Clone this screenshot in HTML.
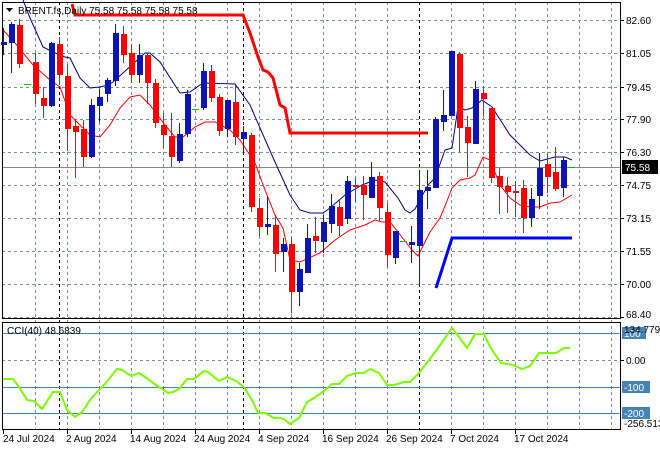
<!DOCTYPE html>
<html><head><meta charset="utf-8"><style>
html,body{margin:0;padding:0;background:#fff;}
svg{display:block;font-family:"Liberation Sans",sans-serif;}
</style></head><body>
<svg width="660" height="450" viewBox="0 0 660 450" xmlns="http://www.w3.org/2000/svg">
<rect width="660" height="450" fill="#fff"/>
<!-- grid -->
<g stroke="#7f8a96" stroke-width="1" stroke-dasharray="3,3" fill="none">
<path d="M2 20.5H620M2 53.5H620M2 87.5H620M2 119.5H620M2 152.5H620M2 185.5H620M2 218.5H620M2 251.5H620M2 284.5H620M2 317.5H620M2 360.5H620"/>
<path d="M35.5 2V429M67.5 2V429M99.5 2V429M131.5 2V429M163.5 2V429M195.5 2V429M227.5 2V429M259.5 2V429M291.5 2V429M323.5 2V429M355.5 2V429M387.5 2V429M451.5 2V429M483.5 2V429M515.5 2V429M547.5 2V429M579.5 2V429M611.5 2V429"/>
</g>
<g stroke="#000" stroke-width="1" stroke-dasharray="3,3">
<path d="M59.5 2V429M243.5 2V429M419.5 2V429"/>
</g>
<!-- price line -->
<path d="M2 167.5H620" stroke="#808890" stroke-width="1"/>
<!-- borders -->
<g stroke="#000" stroke-width="1" fill="none">
<rect x="2.5" y="2.5" width="618" height="316"/>
<rect x="2.5" y="322.5" width="618" height="107"/>
</g>
<!-- MA lines -->
<polyline fill="none" stroke="#000080" stroke-width="1" points="23,0 30,18 43,47 53,52 65,57 70,58 80,78 90,88 100,87 108,85 113,82 145,53 150,53 160,62 180,93 190,92 200,85 205,83 235,84 250,105 260,128 275,162 290,195 300,210 310,213 323,213 330,208 345,195 362,185 375,180 385,182 398,198 405,210 410,213 415,209 428,185 435,178 445,150 452,148 458,107 465,110 472,108 482,100 492,107 510,135 520,145 530,155 540,161 555,157 565,157 572,160"/>
<polyline fill="none" stroke="#ff0000" stroke-width="1" points="3,30 15,43 33,65 50,80 60,87 70,115 80,125 90,135 100,137 110,125 120,108 130,97 140,95 150,105 165,125 175,137 183,137 195,127 205,122 215,122 230,130 240,140 255,163 265,190 275,215 283,228 290,260 300,262 320,253 335,240 350,230 365,225 375,220 382,222 390,222 398,232 405,241 412,250 418,256 430,232 440,218 445,206 452,188 460,180 470,178 475,175 483,157 490,160 500,185 510,198 520,205 530,207 540,207 550,203 560,202 572,195"/>
<!-- step lines -->
<polyline fill="none" stroke="#ff0000" stroke-width="3" points="72,4 75,15 243,15 250,33 258,57 263,70 268,72 273,78 280,105 285,108 290,133 428,133"/>
<polyline fill="none" stroke="#0000ff" stroke-width="3" points="436,288 452,238 572,238"/>
<!-- red candles -->
<g stroke="#ff0000" fill="#ff0000" stroke-width="1">
<path d="M19.5 19V68M35.5 53V104M43.5 87V118M59.5 37V85M67.5 65V151M75.5 120V178M83.5 120V167M123.5 26V63M131.5 44V83M147.5 53V104M155.5 79V128M163.5 113V148M171.5 113V167M211.5 65V102M219.5 94V136M235.5 85V145M251.5 133V212M259.5 198V236M275.5 215V272M291.5 237V313M315.5 217V253M339.5 199V236M355.5 178V202M363.5 176V220M379.5 172V221M387.5 203V267M459.5 52V152M467.5 116V177M483.5 86V116M491.5 108V183M499.5 168V214M507.5 177V213M515.5 181V217M523.5 180V233M547.5 154V193M555.5 147V191"/>
<g stroke="none">
<rect x="17" y="25" width="6" height="39"/><rect x="33" y="62" width="6" height="32"/><rect x="41" y="98" width="6" height="8"/><rect x="57" y="44" width="6" height="31"/><rect x="65" y="76" width="6" height="53"/><rect x="73" y="126" width="6" height="6"/><rect x="81" y="129" width="6" height="28"/><rect x="121" y="34" width="6" height="21"/><rect x="129" y="53" width="6" height="22"/><rect x="145" y="55" width="6" height="28"/><rect x="153" y="83" width="6" height="40"/><rect x="161" y="125" width="6" height="10"/><rect x="169" y="136" width="6" height="21"/><rect x="209" y="71" width="6" height="27"/><rect x="217" y="97" width="6" height="34"/><rect x="233" y="102" width="6" height="35"/><rect x="249" y="135" width="6" height="72"/><rect x="257" y="208" width="6" height="19"/><rect x="273" y="225" width="6" height="29"/><rect x="289" y="244" width="6" height="48"/><rect x="313" y="236" width="6" height="5"/><rect x="337" y="207" width="6" height="19"/><rect x="353" y="185" width="6" height="2"/><rect x="361" y="185" width="6" height="10"/><rect x="377" y="176" width="6" height="32"/><rect x="385" y="212" width="6" height="43"/><rect x="457" y="54" width="6" height="74"/><rect x="465" y="127" width="6" height="16"/><rect x="481" y="93" width="6" height="6"/><rect x="489" y="108" width="6" height="70"/><rect x="497" y="176" width="6" height="11"/><rect x="505" y="186" width="6" height="6"/><rect x="513" y="191" width="6" height="2"/><rect x="521" y="188" width="6" height="30"/><rect x="545" y="164" width="6" height="13"/><rect x="553" y="172" width="6" height="17"/>
</g></g>
<!-- blue candles -->
<g stroke="#0a14b4" fill="#0a14b4" stroke-width="1">
<path d="M3.5 28V55M11.5 22V73M51.5 42V107M91.5 99V158M99.5 89V122M107.5 78V102M115.5 24V86M139.5 44V83M179.5 123V163M187.5 90V137M203.5 63V110M227.5 100V137M243.5 126V154M267.5 197V235M283.5 238V272M299.5 263V306M307.5 224V273M323.5 215V253M331.5 194V233M347.5 176V224M371.5 162V198M395.5 231V264M411.5 226V263M419.5 170V287M427.5 170V209M435.5 117V188M443.5 90V131M451.5 51V116M475.5 81V144M531.5 188V227M539.5 153V209M563.5 157V197"/>
<g stroke="none">
<rect x="1" y="42" width="6" height="3"/><rect x="9" y="24" width="6" height="19"/><rect x="49" y="43" width="6" height="63"/><rect x="89" y="105" width="6" height="52"/><rect x="97" y="97" width="6" height="9"/><rect x="105" y="80" width="6" height="14"/><rect x="113" y="33" width="6" height="48"/><rect x="137" y="55" width="6" height="20"/><rect x="177" y="134" width="6" height="27"/><rect x="185" y="94" width="6" height="40"/><rect x="201" y="71" width="6" height="37"/><rect x="225" y="100" width="6" height="29"/><rect x="241" y="132" width="6" height="7"/><rect x="265" y="224" width="6" height="3"/><rect x="281" y="244" width="6" height="8"/><rect x="297" y="269" width="6" height="23"/><rect x="305" y="238" width="6" height="35"/><rect x="321" y="222" width="6" height="20"/><rect x="329" y="206" width="6" height="18"/><rect x="345" y="181" width="6" height="38"/><rect x="369" y="177" width="6" height="21"/><rect x="393" y="231" width="6" height="27"/><rect x="409" y="242" width="6" height="3"/><rect x="417" y="190" width="6" height="56"/><rect x="425" y="187" width="6" height="4"/><rect x="433" y="119" width="6" height="69"/><rect x="441" y="115" width="6" height="7"/><rect x="449" y="51" width="6" height="65"/><rect x="473" y="89" width="6" height="55"/><rect x="529" y="199" width="6" height="19"/><rect x="537" y="168" width="6" height="28"/><rect x="561" y="160" width="6" height="28"/>
</g></g>
<!-- doji dashes -->
<g stroke="#00c000" stroke-width="1"><path d="M24 84.5H31M192 109.5H199M400 241.5H407M568 167.5H575"/></g>
<!-- CCI level lines -->
<g stroke="#4682b4" stroke-width="1"><path d="M3 333.5H620M3 387.5H620M3 413.5H620"/></g>
<polyline fill="none" stroke="#7cfc00" stroke-width="2" points="3,379 13,379 19,387 27,400 34,401 42,409 53,392 60,392 67,410 75,417 82,412 90,400 99,390 105,384 117,369 122,370 131,376 139,373 145,377 156,385 168,393 173,392 179,389 187,379 194,379 204,371 208,372 219,381 227,377 236,381 244,387 253,402 258,413 265,413 274,418 280,418 284,419 290,424 299,418 307,402 314,398 324,391 332,384 339,384 347,376 356,373 364,373 370,369 379,373 387,385 394,385 404,382 410,382 419,373 429,360 438,348 452,328 459,337 467,348 475,334 484,334 490,347 501,363 513,365 522,369 530,366 539,353 545,353 556,353 564,348 570,348"/>
<!-- axis ticks -->
<g stroke="#000"><path d="M621 20.5h3M621 53.5h3M621 87.5h3M621 119.5h3M621 152.5h3M621 185.5h3M621 218.5h3M621 251.5h3M621 284.5h3M621 317.5h3M621 360.5h3M3.5 430v4M67.5 430v4M131.5 430v4M195.5 430v4M259.5 430v4M323.5 430v4M387.5 430v4M451.5 430v4M515.5 430v4"/></g>
<!-- price axis labels -->
<g font-size="10" fill="#000">
<text x="626" y="24">82.60</text><text x="626" y="57">81.05</text><text x="626" y="91">79.45</text><text x="626" y="123">77.90</text><text x="626" y="156">76.30</text><text x="626" y="189">74.75</text><text x="626" y="222">73.15</text><text x="626" y="255">71.55</text><text x="626" y="288">70.00</text><text x="626" y="318">68.40</text>
</g>
<rect x="622" y="160" width="36" height="14" fill="#000"/>
<text x="625" y="171" font-size="10" fill="#fff">75.58</text>
<!-- CCI labels -->
<rect x="622" y="327" width="24" height="12" fill="#4682b4"/>
<rect x="622" y="381" width="28" height="12" fill="#4682b4"/>
<rect x="622" y="407" width="28" height="12" fill="#4682b4"/>
<g font-size="10" fill="#000">
<text x="624" y="337" fill="#fff">100</text>
<text x="624" y="333">134.779</text>
<text x="626" y="364">0.00</text>
<text x="624" y="391" fill="#fff">-100</text>
<text x="624" y="417" fill="#fff">-200</text>
<text x="624" y="427">-256.513</text>
</g>
<!-- titles -->
<path d="M6 8h7l-3.5 4z" fill="#000"/>
<text x="18" y="14" font-size="10" fill="#000">BRENT.fs,Daily  75.58 75.58 75.58 75.58</text>
<text x="7" y="334" font-size="10" fill="#000">CCI(40) 48.6839</text>
<!-- dates -->
<g font-size="10" fill="#000">
<text x="3" y="442">24 Jul 2024</text><text x="66" y="442">2 Aug 2024</text><text x="130" y="442">14 Aug 2024</text><text x="194" y="442">24 Aug 2024</text><text x="258" y="442">4 Sep 2024</text><text x="322" y="442">16 Sep 2024</text><text x="386" y="442">26 Sep 2024</text><text x="450" y="442">7 Oct 2024</text><text x="514" y="442">17 Oct 2024</text>
</g>
</svg>
</body></html>
